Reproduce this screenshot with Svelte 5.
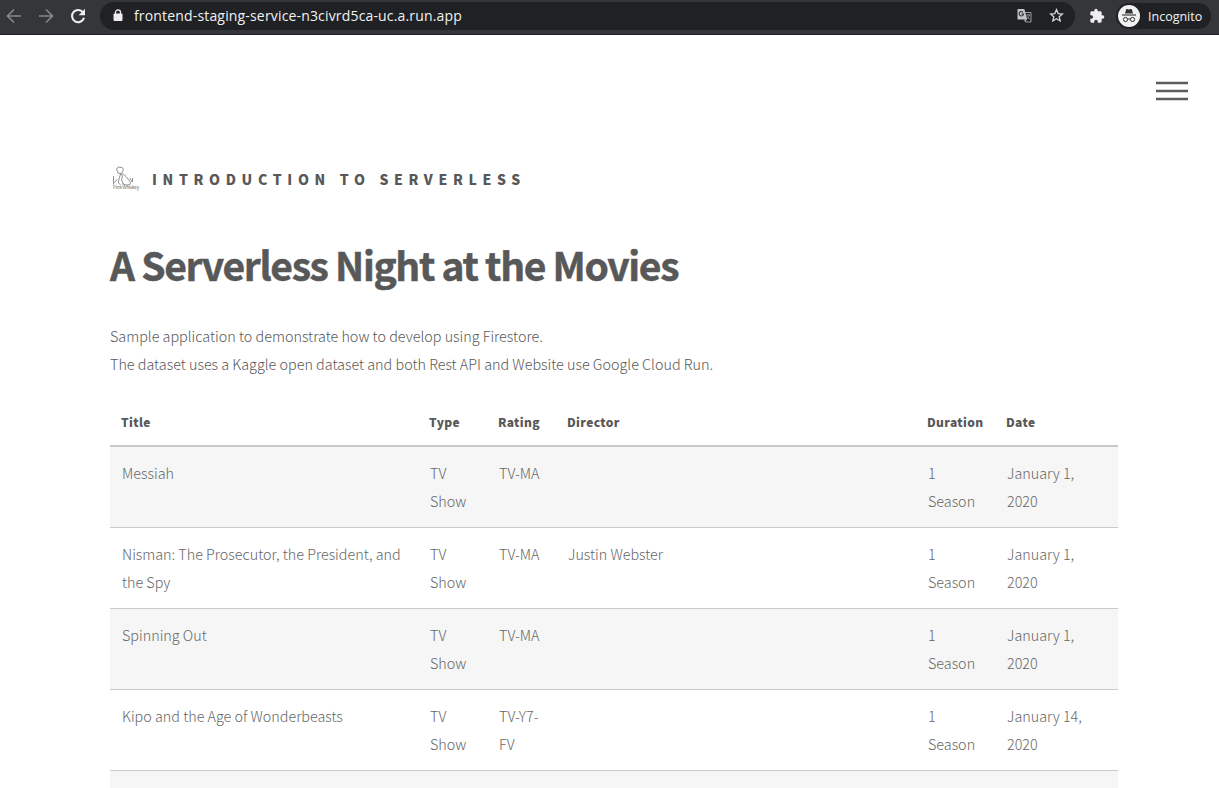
<script>
  const columns = ['Title', 'Type', 'Rating', 'Director', 'Duration', 'Date'];
  const movies = [
    [['Messiah'], ['TV', 'Show'], ['TV-MA'], [], ['1', 'Season'], ['January 1,', '2020']],
    [['Nisman: The Prosecutor, the President, and', 'the Spy'], ['TV', 'Show'], ['TV-MA'], ['Justin Webster'], ['1', 'Season'], ['January 1,', '2020']],
    [['Spinning Out'], ['TV', 'Show'], ['TV-MA'], [], ['1', 'Season'], ['January 1,', '2020']],
    [['Kipo and the Age of Wonderbeasts'], ['TV', 'Show'], ['TV-Y7-', 'FV'], [], ['1', 'Season'], ['January 14,', '2020']],
    [[], [], [], [], [], []]
  ];
</script>

<div class="window">
  <header class="chrome">
    <nav class="controls">
      <svg width="16" height="16" viewBox="0 0 16 16" fill="none" stroke="#87888a" stroke-width="1.7"><path d="M15 8H2M8 1.5 1.5 8 8 14.5" /></svg>
      <svg width="16" height="16" viewBox="0 0 16 16" fill="none" stroke="#87888a" stroke-width="1.7"><path d="M1 8h13M8 1.5 14.500 8 8 14.500" /></svg>
      <svg width="16" height="16" viewBox="0 0 16 16"><path d="M13.300 4.800A6.100 6.100 0 1 0 14 9.800" fill="none" stroke="#eee" stroke-width="2.100" /><path d="M15 .8v6.400H8.700z" fill="#eee" /></svg>
    </nav>
    <div class="address">
      <svg class="lock" width="10" height="13" viewBox="0 0 10 13"><rect x=".5" y="4.500" width="9" height="7.500" rx="1" fill="#eee" /><path d="M2.500 5V3.400a2.500 2.500 0 0 1 5 0V5" fill="none" stroke="#eee" stroke-width="1.300" /></svg>
      <span class="url">frontend-staging-service-n3civrd5ca-uc.a.run.app</span>
      <svg class="translate" width="15" height="15" viewBox="0 0 15 15">
        <path d="M6 4.500h8v9.500H8.500z" fill="none" stroke="#98999b" />
        <path d="M.5 1h6.800l2.900 10.500H.5z" fill="#c4c5c6" />
        <path d="M6 4.300A2.200 2.200 0 1 0 6.500 6H4.500" fill="none" stroke="#303134" stroke-width="1.100" />
        <path d="M9 7h4.300M11 6v1M12.500 7c-.4 1.800-1.600 3-2.600 3.700M10 8.500l2.900 3" fill="none" stroke="#98999b" stroke-width=".9" />
        <path d="m8 11.500-.2 2.500 2.400-2.500z" fill="#b8b9ba" />
      </svg>
      <svg class="star" width="15" height="15" viewBox="0 0 15 15"><path d="m7.500 1.600 1.700 4 4.300.4-3.300 2.800 1 4.200-3.700-2.200L3.800 13l1-4.200L1.500 6l4.300-.4z" fill="none" stroke="#d4d5d6" stroke-width="1.300" /></svg>
    </div>
    <svg class="puzzle" width="16" height="16" viewBox="0 0 24 24"><path fill="#eee" d="M20.500 11H19V7c0-1.100-.9-2-2-2h-4V3.500a2.500 2.500 0 0 0-5 0V5H4c-1.100 0-2 .9-2 2v3.800h1.500a2.700 2.700 0 0 1 0 5.400H2V20c0 1.100.9 2 2 2h3.800v-1.500a2.700 2.700 0 0 1 5.400 0V22H17c1.100 0 2-.9 2-2v-4h1.500a2.500 2.500 0 0 0 0-5z" /></svg>
    <div class="profile">
      <svg width="22" height="22" viewBox="0 0 22 22">
        <circle cx="11" cy="11" r="11" fill="#f1f1f1" />
        <path d="M7 8.500 8.100 4.600q.3-.7 1-.5l1.900.5 1.900-.5q.7-.2 1 .5L15 8.500z" fill="#303134" />
        <path d="M4 10h14" stroke="#303134" stroke-width="1.100" />
        <g fill="none" stroke="#303134"><circle cx="7.500" cy="14.500" r="2.100" /><circle cx="14.500" cy="14.500" r="2.100" /><path d="M9.600 14.200q1.400-.7 2.800 0" /></g>
      </svg>
      <span>Incognito</span>
    </div>
  </header>

  <div class="menu-row">
    <svg width="32" height="20" viewBox="0 0 32 20"><path d="M0 2h32M0 10h32M0 18h32" stroke="#5c5c5c" stroke-width="2.500" /></svg>
  </div>

  <main>
    <div class="brand">
      <svg width="28" height="26" viewBox="0 0 28 26" fill="none" stroke="#777" stroke-width=".8">
        <path d="m5 2 2-1.200 1 .8 2-.2 1.300 1.800L10.500 6 9 7.800 6 7 4.800 4zM9 7.500c3 1 5 2.500 7 5.500 1.800 2 3 4 2 5.500-2.500 1-6 .2-8-.7M8.500 8 7 13l-.7 4 2.200 1.500M8.500 8l2 2-1 4 2 4M1.500 10v8.500M1.500 17l4-3.500M18 12l2 4M20.500 12v4" />
        <text x="1" y="23" textLength="26">Pink Whiskey</text>
      </svg>
      <span>Introduction to Serverless</span>
    </div>
    <h1>A Serverless Night at the Movies</h1>
    <p class="intro">Sample application to demonstrate how to develop using Firestore.<br />The dataset uses a Kaggle open dataset and both Rest API and Website use Google Cloud Run.</p>
    <table>
      <thead><tr>{#each columns as column}<th>{column}</th>{/each}</tr></thead>
      <tbody>
        {#each movies as movie}
          <tr>{#each movie as cell}<td>{#each cell as line}<div>{line}</div>{/each}</td>{/each}</tr>
        {/each}
      </tbody>
    </table>
  </main>
</div>

<style>
  :global(body) { margin: 0; background: #fff; overflow: hidden; }
  .window { height: 788px; overflow: hidden; font-family: "Noto Sans CJK SC", sans-serif; color: #585858; }
  svg { display: block; flex: none; }
  .chrome { box-sizing: border-box; height: 35px; display: flex; align-items: center; background: #35363a; border-bottom: 1px solid #202124; padding: 0 8px 3px 6px; font-family: "Open Sans", sans-serif; color: #f1f1f1; }
  .controls { display: flex; flex: none; gap: 16px; width: 94px; }
  .address { display: flex; flex: none; align-items: center; width: 975px; height: 28px; box-sizing: border-box; padding: 0 11px 0 13px; border-radius: 14px; background: #202124; }
  .url { margin-left: 11px; font-size: 14px; letter-spacing: .165px; line-height: 20px; white-space: nowrap; }
  .translate { margin-left: auto; }
  .star { margin-left: 17px; }
  .puzzle { margin-left: 14px; }
  .profile { box-sizing: border-box; flex: none; display: flex; align-items: center; gap: 8px; width: 95px; height: 26px; margin-left: 11px; padding-left: 2px; border-radius: 13px; background: #202124; font-size: 12.500px; line-height: 20px; }
  .profile span { position: relative; top: 1px; }
  .menu-row { display: flex; justify-content: flex-end; padding: 46px 31px 0 0; }
  main { width: 1008px; margin: 64px 0 0 110px; }
  .brand { display: flex; height: 28px; align-items: center; gap: 12px; padding-left: 2px; font-size: 14px; font-weight: 900; letter-spacing: 5.650px; text-transform: uppercase; white-space: nowrap; line-height: 28px; }
  .brand text { font-size: 4.500px; font-weight: 400; letter-spacing: 0; text-transform: none; fill: #666; stroke: none; }
  h1 { margin: 43px 0 0; height: 56px; line-height: 56px; font-size: 39px; font-weight: 700; letter-spacing: -1.350px; -webkit-text-stroke: .5px #585858; white-space: nowrap; }
  .intro { margin: 30px 0 0; font-size: 14.360px; line-height: 28px; font-weight: 200; white-space: nowrap; }
  table { width: 1008px; margin-top: 21px; border-collapse: separate; border-spacing: 0; table-layout: fixed; font-size: 14.350px; font-weight: 200; line-height: 28px; }
  th { box-sizing: border-box; height: 48px; padding: 0 0 0 11px; text-align: left; font-size: 12px; letter-spacing: .370px; line-height: 24px; font-weight: 900; border-bottom: 2px solid #c9c9c9; }
  th:nth-child(1) { width: 308px; }
  th:nth-child(2), th:nth-child(3) { width: 69px; }
  th:nth-child(4) { width: 360px; }
  th:nth-child(5) { width: 79px; }
  td { box-sizing: border-box; height: 81px; padding: 12px 0 12px 12px; vertical-align: top; white-space: nowrap; color: #666; border-bottom: 1px solid #c9c9c9; }
  tbody tr:nth-child(odd) { background: #f6f6f6; }
</style>
